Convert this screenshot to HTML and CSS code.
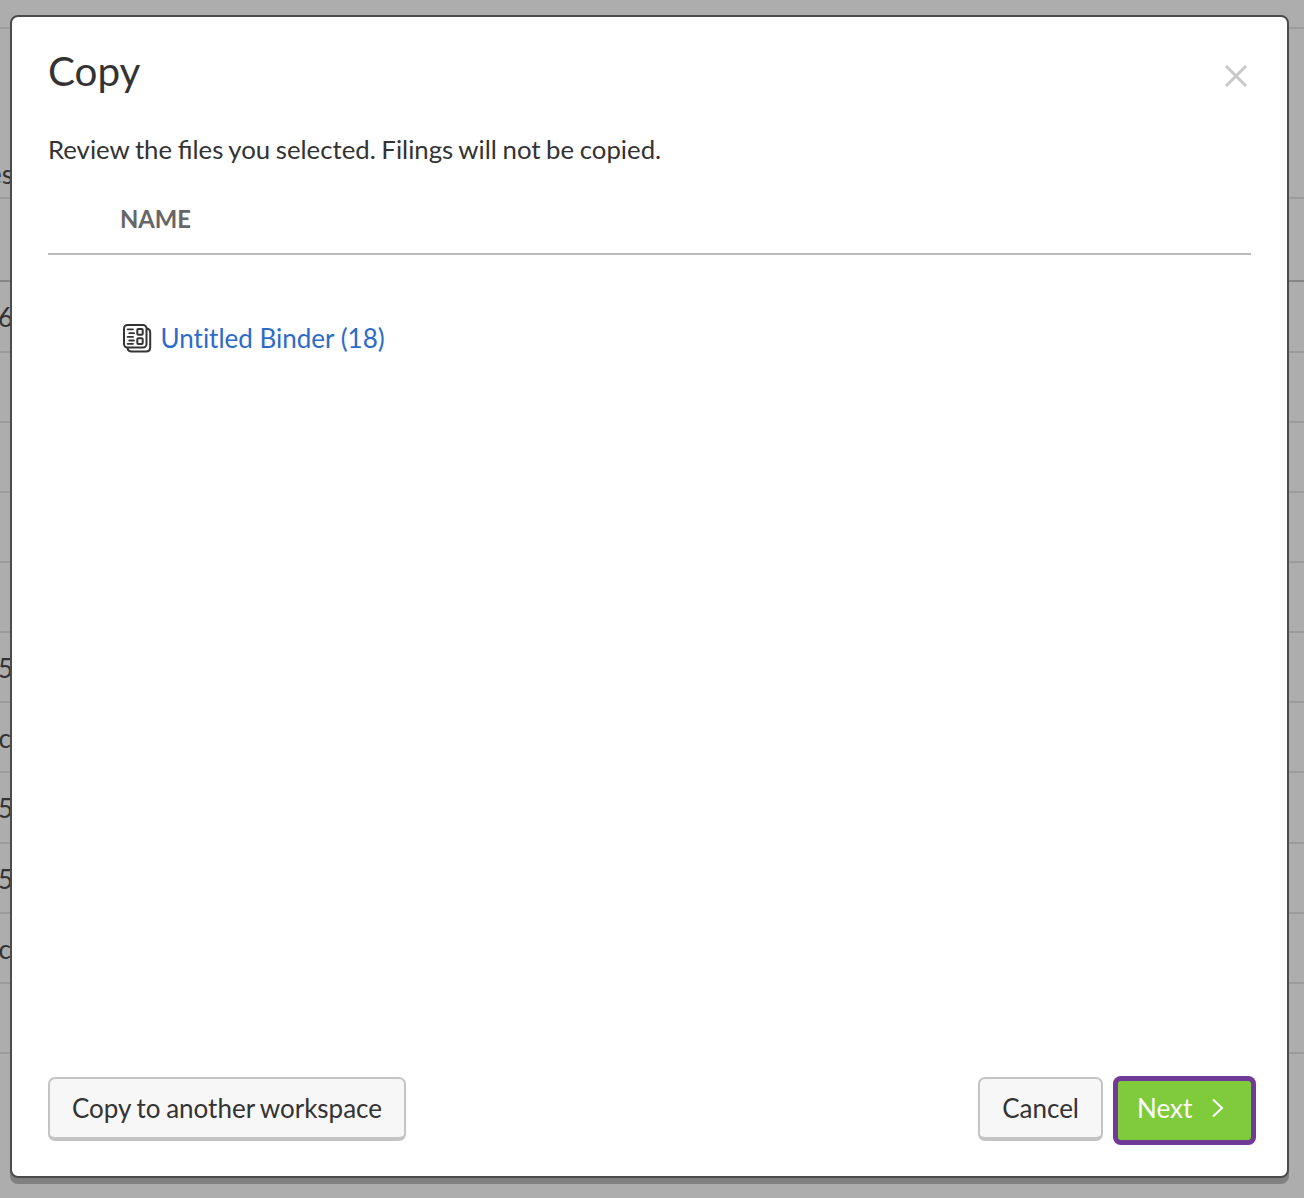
FILE: index.html
```html
<!DOCTYPE html>
<html lang="en">
<head>
<meta charset="utf-8">
<title>Copy</title>
<link rel="stylesheet" href="styles.css">
</head>
<body>
<div class="backdrop" aria-hidden="true">
  <div class="row row-top"></div>
  <div class="row row-header"><span class="clip">es</span></div>
  <div class="row row-filter"></div>
  <div class="row"><span class="clip">6</span></div>
  <div class="row"></div>
  <div class="row"></div>
  <div class="row"></div>
  <div class="row"></div>
  <div class="row"><span class="clip">5</span></div>
  <div class="row"><span class="clip letter">c</span></div>
  <div class="row"><span class="clip">5</span></div>
  <div class="row"><span class="clip">5</span></div>
  <div class="row"><span class="clip letter">c</span></div>
  <div class="row"></div>
</div>
<section class="dialog" role="dialog" aria-labelledby="title">
  <header class="dialog-header">
    <h1 id="title">Copy</h1>
    <button class="close" aria-label="Close">
      <svg width="22" height="22" viewBox="0 0 22 22"><path d="M2 2l18 18M20 2L2 20" fill="none" stroke="#c9c9c9" stroke-width="3.1" stroke-linecap="round"/></svg>
    </button>
  </header>
  <p class="intro">Review the files you selected. Filings will not be copied.</p>
  <div class="list-head">NAME</div>
  <div class="list">
    <a class="file">
      <svg class="file-icon" width="30" height="30" viewBox="0 0 30 30" fill="none" stroke="#343434" stroke-width="2" stroke-linecap="round" stroke-linejoin="round">
        <rect x="2" y="2" width="22.5" height="22.5" rx="3.5"/>
        <path d="M5.5 25.2Q6.2 28.5 9.5 28.5H24Q28.2 28.5 28.2 24.3V9.5Q28.2 6.3 25.2 5.5"/>
        <path d="M5.6 6.3H11M7.2 10.2H12M5.6 13.9H11M7.2 17.5H12M5.6 20.8H11" stroke-width="1.8"/>
        <rect x="15.3" y="6" width="5.4" height="5.8" rx="1"/>
        <rect x="15.3" y="15.2" width="5.4" height="5.8" rx="1"/>
      </svg>
      <span>Untitled Binder (18)</span>
    </a>
  </div>
  <footer class="dialog-footer">
    <button class="button">Copy to another workspace</button>
    <button class="button cancel">Cancel</button>
    <button class="button primary">Next
      <svg width="14" height="22" viewBox="0 0 14 22"><path d="M2 2.5L11 11L2 19.5" fill="none" stroke="#fff" stroke-width="2"/></svg>
    </button>
  </footer>
</section>
</body>
</html>
```
FILE: styles.css
```css
* {
  box-sizing: border-box;
}

body {
  margin: 0;
  height: 1198px;
  position: relative;
  overflow: hidden;
  background: #adadad;
  color: #333;
  font: 26px/32px Lato, sans-serif;
}

.backdrop {
  display: flex;
  flex-direction: column;
}

.row {
  flex: none;
  height: 70.15px;
  padding-top: 19px;
  border-bottom: 2px solid #9b9b9b;
}

.row-top {
  height: 29.4px;
}

.row-header {
  height: 170px;
  padding-top: 129px;
}

.row-filter {
  height: 83px;
  border-color: #868686;
}

.clip {
  display: flex;
  justify-content: flex-end;
  width: 13px;
}

.letter {
  width: 11px;
}

.dialog {
  position: absolute;
  left: 10px;
  top: 15px;
  width: 1279px;
  height: 1163px;
  display: flex;
  flex-direction: column;
  padding: 28px 36px 36px;
  border: 2px solid #4b4b4b;
  border-radius: 8px;
  background: #fff;
  box-shadow: 0 6px 0 #808080;
}

.dialog-header {
  display: flex;
  justify-content: space-between;
  height: 88px;
}

h1 {
  margin: 0;
  font-size: 40.4px;
  line-height: 51px;
  font-weight: 400;
}

.close {
  display: flex;
  width: 22px;
  height: 22px;
  margin: 20px 4px 0 0;
  padding: 0;
  border: 0;
  background: none;
}

.intro {
  margin: 0;
  height: 70px;
  font-size: 25.78px;
  word-spacing: -1px;
}

.list-head {
  height: 52px;
  padding-left: 72px;
  border-bottom: 2px solid #bbb;
  color: #666;
  font-size: 23.8px;
  font-weight: 700;
}

.list {
  flex: 1;
  padding: 67px 0 0 74px;
}

.file {
  display: flex;
  align-items: center;
  gap: 8.5px;
  color: #2d6bc9;
  font-size: 26px;
  font-variant-ligatures: none;
}

.dialog-footer {
  display: flex;
  height: 64px;
}

.button {
  height: 64px;
  margin-top: 1px;
  padding: 0 22px;
  border: 2px solid #c4c4c4;
  border-bottom-width: 4px;
  border-radius: 7px;
  background: #f7f7f7;
  color: #333;
  font: inherit;
  word-spacing: -1px;
}

.cancel {
  margin-left: auto;
}

.primary {
  display: flex;
  align-items: center;
  gap: 19px;
  width: 133px;
  height: 59px;
  margin: 5px 0 0 15px;
  padding: 0 0 5px 19px;
  border: 0;
  border-radius: 3px;
  background: #80cb3c;
  color: #fff;
  box-shadow: 0 0 0 5px #703a96;
}
```
